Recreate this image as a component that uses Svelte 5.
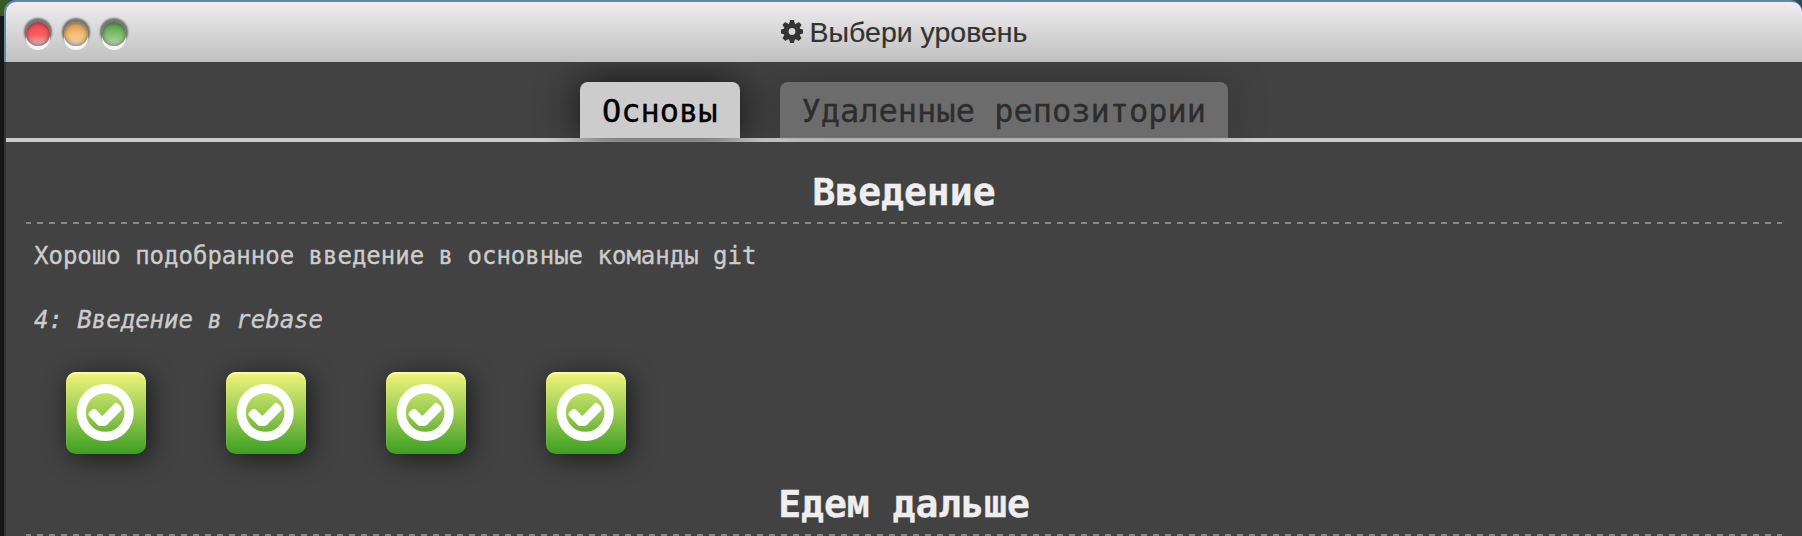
<script>
  const tabs = [
    { label: 'Основы', active: true },
    { label: 'Удаленные репозитории', active: false }
  ];
  const levels = [1, 2, 3, 4];
</script>

<div class="desktop">
  <div class="window">
    <header>
      <div class="lights">
        <span class="light red"></span>
        <span class="light yellow"></span>
        <span class="light green"></span>
      </div>
      <h1>
        <svg width="22" height="23" viewBox="-11 -11.5 22 23" aria-hidden="true">
          <g fill="#333">
            {#each [0, 45, 90, 135] as angle}
              <path d="M-3-7-2.1-11.1Q-2-11.4-1.6-11.4H1.6Q2-11.4 2.1-11.1L3-7V7L2.1 11.1Q2 11.4 1.6 11.4H-1.6Q-2 11.4-2.1 11.1L-3 7Z" transform="rotate({angle})" />
            {/each}
            <circle r="8.6" />
          </g>
          <circle r="3.4" fill="#dadada" />
        </svg>
        <span>Выбери уровень</span>
      </h1>
    </header>
    <main>
      <nav>
        {#each tabs as tab}
          <div class="tab" class:active={tab.active}>{tab.label}</div>
        {/each}
      </nav>
      <section>
        <h2>Введение</h2>
        <p>Хорошо подобранное введение в основные команды git</p>
        <p class="current">4: Введение в rebase</p>
        <div class="levels">
          {#each levels as level (level)}
            <div class="level">
              <svg width="80" height="82" viewBox="0 0 80 82">
                <circle cx="39.2" cy="40.5" r="23.9" fill="none" stroke="#fff" stroke-width="9.2" />
                <path fill="#fff" d="M23 40.2 26.6 37.2Q28.3 36.2 29.9 37.6L36.3 44 48.5 31.4Q50.2 30 51.9 31.4L55.3 35Q56.4 36.6 55.2 38.2L41.6 52.2Q40 54 37.6 54H35Q32.8 54 31.2 52.4L22.9 43.8Q21.7 41.8 23 40.2Z" />
              </svg>
            </div>
          {/each}
        </div>
      </section>
      <section>
        <h2>Едем дальше</h2>
      </section>
    </main>
  </div>
</div>

<style>
  .desktop {
    box-sizing: border-box;
    width: 1802px;
    height: 536px;
    padding-left: 4px;
    overflow: hidden;
    background: linear-gradient(#385b25 16px, #171717 16px) 0 0 / 8px 100% no-repeat, #2c4a60;
  }
  .window {
    box-sizing: border-box;
    height: 536px;
    border-top: 2px solid #6389a5;
    border-radius: 12px 12px 0 0;
    background: linear-gradient(#6389a5 60px, #333 60px);
    padding-left: 2px;
    display: flex;
    flex-direction: column;
  }
  header {
    height: 60px;
    flex: none;
    display: grid;
    grid-template-columns: 1fr auto 1fr;
    align-items: center;
    border-radius: 10px 10px 0 0;
    background: linear-gradient(#efedef, #c0c0c0);
  }
  .lights {
    display: flex;
    gap: 14px;
    padding-left: 20px;
  }
  .light {
    width: 24px;
    height: 24px;
    margin-top: 4px;
    border-radius: 50%;
    box-shadow: inset 0 0 5px rgba(0, 0, 0, .55), 0 4px 0 #f5f5f5, 0 -2px 2px 2px rgba(0, 0, 0, .48);
  }
  .red { background: linear-gradient(#df4b4d, #fb5e62 55%, #d5c5c5); }
  .yellow { background: linear-gradient(#d49b50, #f9c078 55%, #ddd1c0); }
  .green { background: linear-gradient(#569846, #83c270 55%, #c5d4c0); }
  h1 {
    margin: 0;
    padding-top: 1px;
    display: flex;
    align-items: center;
    gap: 7px;
    color: #333;
    font: 400 28.5px/59px "Liberation Sans", Arial, sans-serif;
    -webkit-text-stroke: .2px;
  }
  h1 svg { margin-top: -2px; }
  main {
    flex: 1;
    min-height: 0;
    background: #424242;
    font-family: "DejaVu Sans Mono", monospace;
    -webkit-text-stroke: .35px;
  }
  nav {
    height: 76px;
    display: flex;
    justify-content: center;
    align-items: flex-end;
    gap: 40px;
    border-bottom: 4px solid #ccc;
  }
  .tab {
    box-sizing: border-box;
    height: 56px;
    padding: 0 22px;
    border-radius: 8px 8px 0 0;
    background: #6c6c6c;
    color: #2d2d2d;
    font-size: 32px;
    line-height: 58px;
    box-shadow: 0 0 40px rgba(0, 0, 0, .25);
    clip-path: inset(-20px -50px -4px);
  }
  .tab.active {
    background: #ccc;
    color: #000;
    box-shadow: 0 0 40px rgba(0, 0, 0, .75);
  }
  section { padding: 0 20px; }
  h2 {
    margin: 0;
    height: 82px;
    box-sizing: border-box;
    padding-top: 28px;
    text-align: center;
    color: #eee;
    font-size: 38px;
    line-height: 44px;
    background: repeating-linear-gradient(90deg, #868686 0 6px, transparent 6px 12px) -1px 100% / 1800px 2px no-repeat;
  }
  p {
    margin: 0;
    padding: 16px 8px 0;
    color: #ccc;
    font-size: 24px;
    line-height: 32px;
  }
  .current {
    padding-top: 32px;
    font-style: italic;
  }
  .levels {
    display: flex;
    gap: 80px;
    padding: 36px 40px 0;
    height: 82px;
  }
  .level {
    width: 80px;
    height: 82px;
    border-radius: 10px;
    background: linear-gradient(#f1f57c, #3ca023);
    box-shadow: 4px 4px 24px rgba(0, 0, 0, .6), inset 0 2px 1px rgba(255, 255, 170, .65);
  }
  .level svg { display: block; }
</style>
